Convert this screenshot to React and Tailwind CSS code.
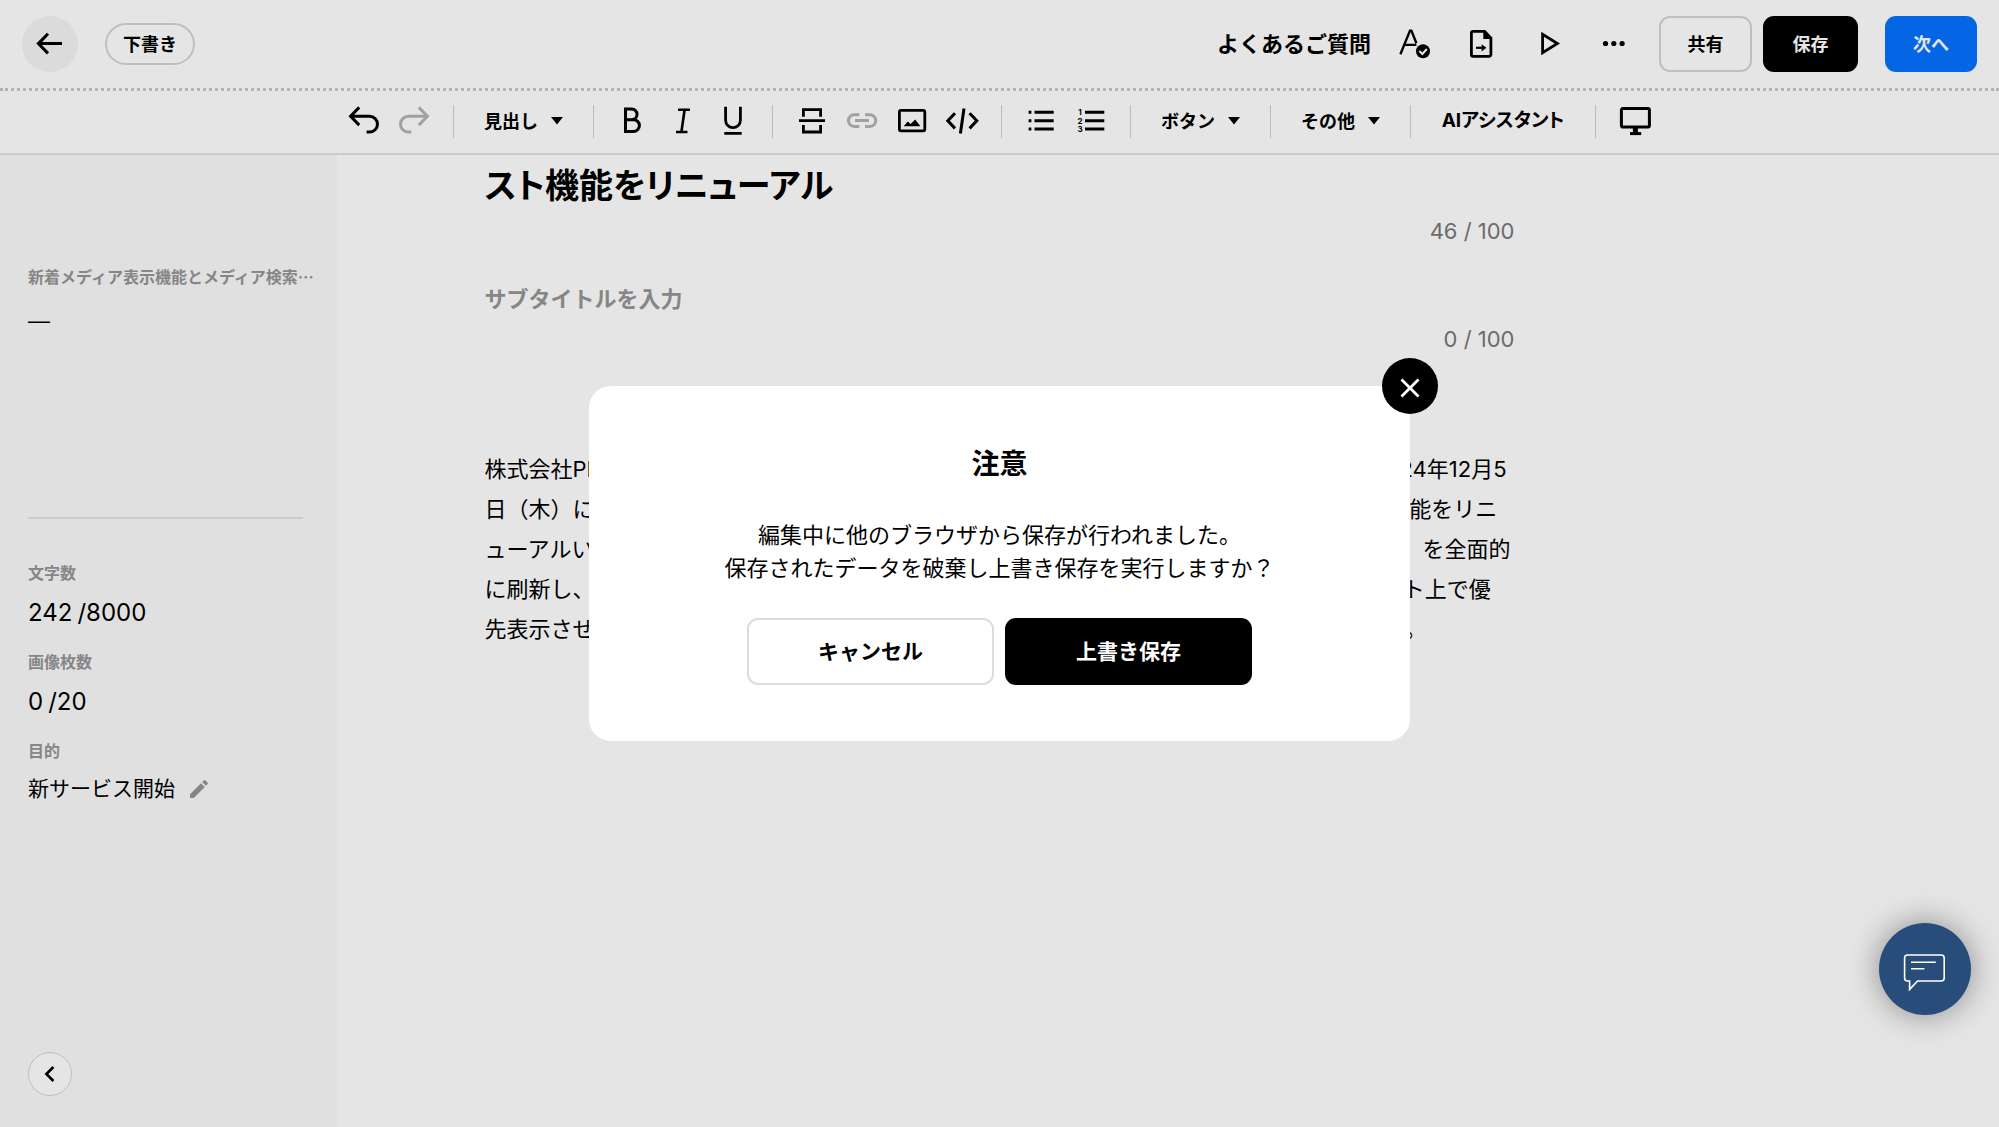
import { useState } from 'react';
import { MdEdit } from 'react-icons/md';

const Icon = ({ children, width = 3, className = '' }) => (
  <svg
    viewBox="0 0 34 34"
    className={`size-[34px] shrink-0 ${className}`}
    fill="none"
    stroke="currentColor"
    strokeWidth={width}
    aria-hidden="true"
  >
    {children}
  </svg>
);

const icons = {
  undo: (
    <Icon>
      <path d="M3.5 12.3H22.6a7.85 7.85 0 0 1 0 15.7h-3M12.2 3.4 3.6 12.3l8.6 8.8" />
    </Icon>
  ),
  redo: (
    <Icon className="text-[#b4b4b4]">
      <path d="M30.5 12.3H11.4a7.85 7.85 0 0 0 0 15.7h3M21.8 3.4l8.6 8.9-8.6 8.8" />
    </Icon>
  ),
  bold: (
    <Icon>
      <path d="M9.5 5h6.2a5.3 5.3 0 0 1 0 10.7H9.5zM9.5 15.7h8a5.9 5.9 0 0 1 0 11.8h-8z" />
    </Icon>
  ),
  italic: (
    <Icon width={2.6}>
      <path d="M12 5.7h12M10 28h11.5M18.6 5.7 15.4 28" />
    </Icon>
  ),
  underline: (
    <Icon width={2.8}>
      <path d="M9.6 2.7v13.5a7.4 7.4 0 0 0 14.8 0V2.7M8.3 29.3h17.4" />
    </Icon>
  ),
  rule: (
    <Icon width={2.8}>
      <path d="M8.4 12.7v-7h17.2v7M4 16.7h26M8.4 21v7h17.2v-7" />
    </Icon>
  ),
  link: (
    <Icon className="text-[#b4b4b4]">
      <path d="M14.3 10.8H9.2a5.8 5.8 0 0 0 0 11.6h5.1M20 10.8h5a5.8 5.8 0 0 1 0 11.6h-5M10 16.6h14" />
    </Icon>
  ),
  image: (
    <Icon width={2.8}>
      <rect x="4.4" y="6.4" width="25.4" height="20.4" rx="1.6" />
      <path d="M8.7 22.2 12.8 17.4l2.8 2.6 4.6-4.6 5.2 6.8z" fill="currentColor" stroke="none" />
    </Icon>
  ),
  code: (
    <Icon>
      <path d="M10 9.2 2.8 16.8l7.2 7.6M24.6 9.2l7.2 7.6-7.2 7.6M19 4.5l-3.6 25" />
    </Icon>
  ),
  bullets: (
    <Icon>
      <path d="M10.5 8.3h19.2M10.5 16.7h19.2M10.5 25.1h19.2M4.6 8.3h2.8M4.6 16.7h2.8M4.6 25.1h2.8" />
    </Icon>
  ),
  numbers: (
    <Icon>
      <path d="M11 8.3h19.3M11 16.7h19.3M11 25.1h19.3" />
      <g fill="currentColor" stroke="none" fontSize="8" fontWeight="700" textAnchor="middle">
        <text x="6" y="11">1</text>
        <text x="6" y="19.6">2</text>
        <text x="6" y="28.2">3</text>
      </g>
    </Icon>
  ),
  monitor: (
    <Icon>
      <rect x="3.4" y="4.6" width="28" height="18.4" rx="1.4" />
      <path d="M17.4 23v6" strokeWidth="5" />
      <path d="M12 29.6h11.2" />
    </Icon>
  ),
  back: (
    <Icon>
      <path d="M5 16.6h24M15 6.8 5.4 16.6 15 26.4" />
    </Icon>
  ),
  proofread: (
    <Icon width={2.4}>
      <path d="M2.4 27.2 12 3.6h1.4l5 12.6M6.4 17.9h12" />
      <circle cx="25" cy="24.3" r="7" fill="currentColor" stroke="none" />
      <path d="m21.4 24 3 3 4.4-5" stroke="#fff" strokeWidth="2" />
    </Icon>
  ),
  exportFile: (
    <Icon width={2.8}>
      <path d="M20.6 4.4H9.2a1.8 1.8 0 0 0-1.8 1.8v21.4a1.8 1.8 0 0 0 1.8 1.8h15.9a1.8 1.8 0 0 0 1.8-1.8V11z" />
      <path d="M19.3 3v9h9z" fill="currentColor" stroke="none" />
      <path d="M12 20.8h6.4" strokeWidth="2.2" />
      <path d="m17.6 17.2 4.8 3.6-4.8 3.6z" fill="currentColor" stroke="none" />
    </Icon>
  ),
  play: (
    <Icon width={2.8}>
      <path d="M12.6 7.2v18.6l14.8-9.3z" />
    </Icon>
  ),
  more: (
    <Icon>
      <g fill="currentColor" stroke="none">
        <circle cx="9.5" cy="16.5" r="2.6" />
        <circle cx="17.8" cy="16.5" r="2.6" />
        <circle cx="26.1" cy="16.5" r="2.6" />
      </g>
    </Icon>
  ),
};

const IconButton = ({ icon, label }) => (
  <button type="button" aria-label={label} className="flex h-[50px] w-[50px] items-center justify-center">
    {icons[icon]}
  </button>
);

const Separator = () => <span className="mx-3.5 h-[33px] w-px bg-[#d2d2d2]" />;

const MenuButton = ({ children }) => (
  <button
    type="button"
    aria-haspopup="menu"
    className="flex h-[50px] w-[111px] items-center justify-between px-4 text-[18px] font-bold whitespace-nowrap"
  >
    {children}
    <svg viewBox="0 0 12 8" className="h-2 w-3" fill="currentColor" aria-hidden="true">
      <path d="M0 0h12L6 7.5z" />
    </svg>
  </button>
);

const Header = () => (
  <header className="flex h-[91px] items-center border-b-[3px] border-dotted border-[#c8c8c8] px-[22px]">
    <button
      type="button"
      aria-label="戻る"
      className="flex size-[56px] items-center justify-center rounded-full bg-[#f4f4f4]"
    >
      {icons.back}
    </button>
    <span className="ml-[27px] flex h-[42px] items-center rounded-full border-2 border-[#d5d5d5] px-4 text-[18px] font-bold">
      下書き
    </span>

    <div className="ml-auto flex items-center gap-[22px]">
      <a href="#faq" className="text-[22px] font-bold">
        よくあるご質問
      </a>
      <button type="button" aria-label="校正" className="flex w-11 justify-center">{icons.proofread}</button>
      <button type="button" aria-label="書き出し" className="flex w-11 justify-center">{icons.exportFile}</button>
      <button type="button" aria-label="プレビュー" className="flex w-11 justify-center">{icons.play}</button>
      <button type="button" aria-label="その他の操作" className="flex w-11 justify-center">{icons.more}</button>
    </div>

    <div className="ml-6 flex h-[56px] text-[18px] font-bold">
      <button type="button" className="w-[93px] rounded-[11px] border-2 border-[#d5d5d5]">共有</button>
      <button type="button" className="ml-[11px] w-[95px] rounded-[11px] bg-black text-white">保存</button>
      <button type="button" className="ml-[27px] w-[92px] rounded-[11px] bg-[#0571ff] text-white">次へ</button>
    </div>
  </header>
);

const Toolbar = () => (
  <div role="toolbar" className="flex h-[64px] items-center justify-center border-b-2 border-[#e4e4e4] pb-0.5">
    <IconButton icon="undo" label="元に戻す" />
    <IconButton icon="redo" label="やり直す" />
    <Separator />
    <MenuButton>見出し</MenuButton>
    <Separator />
    <IconButton icon="bold" label="太字" />
    <IconButton icon="italic" label="斜体" />
    <IconButton icon="underline" label="下線" />
    <Separator />
    <IconButton icon="rule" label="区切り線" />
    <IconButton icon="link" label="リンク" />
    <IconButton icon="image" label="画像" />
    <IconButton icon="code" label="埋め込み" />
    <Separator />
    <IconButton icon="bullets" label="箇条書き" />
    <IconButton icon="numbers" label="番号付きリスト" />
    <Separator />
    <MenuButton>ボタン</MenuButton>
    <Separator />
    <MenuButton>その他</MenuButton>
    <Separator />
    <button
      type="button"
      className="h-[50px] w-[156px] text-[19px] font-bold whitespace-nowrap [font-feature-settings:'palt']"
    >
      AIアシスタント
    </button>
    <Separator />
    <IconButton icon="monitor" label="表示切替" />
  </div>
);

const Sidebar = () => (
  <aside className="flex flex-col bg-[#fafafa] px-7 pb-[31px]">
    <p className="mt-[109px] text-[16px] leading-6 font-bold whitespace-nowrap text-[#969696]">
      新着メディア表示機能とメディア検索<span className="font-['Noto_Sans_CJK_JP',sans-serif]">…</span>
    </p>
    <p className="mt-4 h-[212px] font-['Liberation_Sans',sans-serif] text-[22px] leading-8">—</p>
    <hr className="mr-1.5 border-t-2 border-[#e4e4e4]" />

    <dl className="mt-[42px] text-[24px]">
      <dt className="text-[16px] leading-6 font-bold text-[#969696]">文字数</dt>
      <dd className="mt-2 mb-[17px] leading-10">
        242<span className="ml-[5px]">/8000</span>
      </dd>
      <dt className="text-[16px] leading-6 font-bold text-[#969696]">画像枚数</dt>
      <dd className="mt-2 mb-[17px] leading-10">
        0<span className="ml-[5px]">/20</span>
      </dd>
      <dt className="text-[16px] leading-6 font-bold text-[#969696]">目的</dt>
      <dd className="mt-1.5 flex items-center text-[21px] leading-10">
        新サービス開始
        <button type="button" aria-label="目的を編集" className="ml-3 text-[#969696]">
          <MdEdit size={24} />
        </button>
      </dd>
    </dl>

    <button
      type="button"
      aria-label="サイドバーを閉じる"
      className="mt-auto flex size-11 items-center justify-center rounded-full border border-[#d5d5d5] bg-white"
    >
      <Icon width={2.6}>
        <path d="m20.4 10-7 7 7 7" />
      </Icon>
    </button>
  </aside>
);

const Editor = () => {
  const [subtitle, setSubtitle] = useState('');

  return (
    <main className="mx-auto w-full max-w-[1030px] text-[22px]">
      <h1 className="mt-2 text-[34px] leading-[46px] font-bold [font-feature-settings:'palt']">
        スト機能をリニューアル
      </h1>
      <p className="mt-1 text-right leading-[36px] text-[#787878]">46 / 100</p>
      <input
        type="text"
        aria-label="サブタイトル"
        placeholder="サブタイトルを入力"
        value={subtitle}
        onChange={(e) => setSubtitle(e.target.value)}
        className="mt-[30px] block h-10 w-full bg-transparent font-bold placeholder:text-[#969696]"
      />
      <p className="mt-0.5 text-right leading-[36px] text-[#787878]">{subtitle.length} / 100</p>
      <p className="mt-[92px] leading-10 whitespace-nowrap">
        株式会社PR TIMES（東京都港区、代表取締役：山口拓己、東証プライム市場:3922）は、2024年12月5<br />
        日（木）に、プレスリリース配信サービス「PR TIMES」において、新メディア検索&amp;リスト機能をリニ<br />
        ューアルいたします。メディアリスト作成の際に使う「新着メディア表示」と「メディア検索」を全面的<br />
        に刷新し、配信実績のある各メディアや新着メディアをプレスリリースの配信先メディアリスト上で優<br />
        先表示させることで、配信先の選定にかかる時間を大幅に短縮し、情報発信しやすくなります。
      </p>
    </main>
  );
};

const OverwriteDialog = ({ onClose }) => (
  <div className="fixed inset-0 flex items-center justify-center bg-black/10">
    <div
      role="dialog"
      aria-modal="true"
      aria-labelledby="dialog-title"
      className="relative w-[821px] rounded-[22px] bg-white pt-[58px] pb-14 text-center"
    >
      <button
        type="button"
        aria-label="閉じる"
        onClick={onClose}
        className="absolute -top-7 -right-7 flex size-14 items-center justify-center rounded-full bg-black text-white"
      >
        <Icon>
          <path d="m8.5 10.5 17 17M25.5 10.5l-17 17" strokeWidth="2.8" />
        </Icon>
      </button>
      <h2 id="dialog-title" className="text-[28px] leading-10 font-bold">注意</h2>
      <p className="mt-[35px] text-[22px] leading-[33px]">
        編集中に他のブラウザから保存が行われました。
        <br />
        保存されたデータを破棄し上書き保存を実行しますか？
      </p>
      <div className="mt-[33px] flex justify-center gap-[11px] text-[21px] font-bold">
        <button type="button" onClick={onClose} className="h-[67px] w-[247px] rounded-[11px] border-2 border-[#dcdcdc]">
          キャンセル
        </button>
        <button type="button" onClick={onClose} className="h-[67px] w-[247px] rounded-[11px] bg-black text-white">
          上書き保存
        </button>
      </div>
    </div>
  </div>
);

const ChatButton = () => (
  <button
    type="button"
    aria-label="チャット"
    className="fixed right-7 bottom-28 size-[92px] rounded-full bg-[#294d7a] text-white shadow-[0_0_32px_rgba(0,0,0,0.4)]"
  >
    <svg viewBox="0 0 92 92" fill="none" stroke="currentColor" strokeWidth="1.6" aria-hidden="true">
      <path d="M30.6 58h-2a3 3 0 0 1-3-3V35a3 3 0 0 1 3-3h33.6a3 3 0 0 1 3 3v20a3 3 0 0 1-3 3H38.6l-8 8.4z" />
      <path d="M32 39.3h24.8M32 45.7h13.4" />
    </svg>
  </button>
);

const App = () => {
  const [dialogOpen, setDialogOpen] = useState(true);

  return (
    <div
      lang="ja"
      className="flex min-h-screen flex-col bg-white font-['Inter','Noto_Sans_CJK_JP',sans-serif] text-black"
    >
      <Header />
      <Toolbar />
      <div className="grid flex-1 grid-cols-[337px_1fr_337px]">
        <Sidebar />
        <Editor />
      </div>
      {dialogOpen && <OverwriteDialog onClose={() => setDialogOpen(false)} />}
      <ChatButton />
    </div>
  );
};

export default App;
